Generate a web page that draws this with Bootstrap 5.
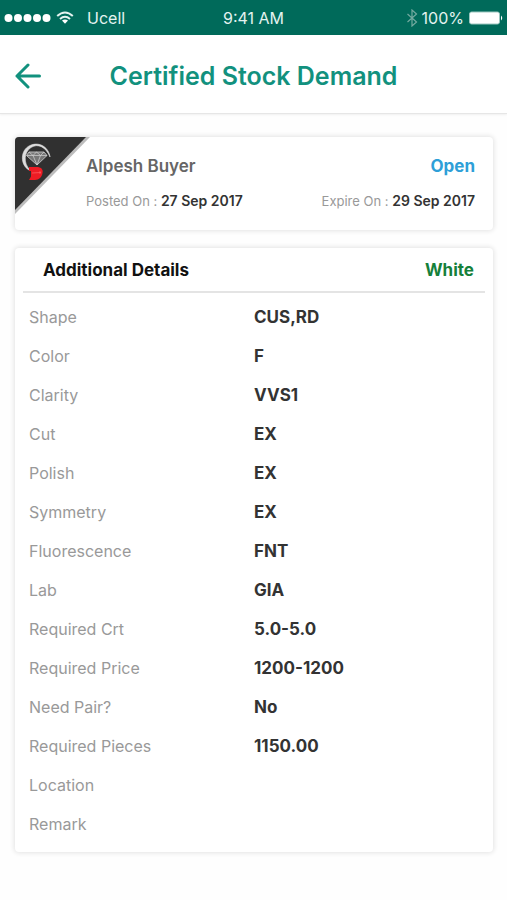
<!DOCTYPE html>
<html lang="en">
<head>
<meta charset="utf-8">
<meta name="viewport" content="width=device-width, initial-scale=1">
<title>Certified Stock Demand</title>
<link href="https://cdn.jsdelivr.net/npm/bootstrap@5.3.0/dist/css/bootstrap.min.css" rel="stylesheet">
<style>
  body { font-family: Inter, "Liberation Sans", sans-serif; font-size: 16px; line-height: 24px; background: #fefefe; color: #333; }
  .status-bar { height: 35px; background: #006a5a; color: #e4f3f0; }
  .status-bar svg, .app-header svg, .brand-corner { display: block; }
  .app-header { height: 79px; padding: 4px 15px 0; border-bottom: 1px solid #e6e6e6; box-shadow: 0 1px 2px #0000000f; background: #fff; }
  .app-header h1 { font-size: 25px; line-height: 32px; color: #12917e; }
  .side { flex: 1 1 0; }
  .page { padding: 23px 14px 22px 15px; }
  .panel { border: 0; border-radius: 4px; box-shadow: 0 0 5px 1px #0000001c; background: #fff; }
  .summary { margin-bottom: 18px; }
  .brand-corner { width: 71px; height: 77px; border-top-left-radius: 4px; overflow: visible; }
  .summary-text { padding: 17px 18px 19px 0; }
  .summary-main { margin-bottom: 13px; font-size: 17px; }
  .buyer-name { color: #666; }
  .state-open { color: #2e9fd8; }
  .dates { font-size: 13px; line-height: 20px; color: #999; }
  .dates strong { font-size: 14px; color: #333; }
  .details-head { margin: 0 8px 4px; padding: 10px 11px 9px 20px; border-bottom: 2px solid #e4e4e4; font-size: 17px; }
  .details-head h2 { font-size: 17px; line-height: 24px; color: #111; }
  .kind { color: #15803a; }
  .details { margin-bottom: 9px; }
  .details td, .details th { height: 39px; padding: 0; vertical-align: middle; text-align: left; }
  .details th { width: 50%; padding-left: 14px; font-weight: 400; color: #999; }
  .details td { font-size: 17px; font-weight: 700; }
</style>
</head>
<body>
<div class="status-bar d-flex align-items-center px-1">
  <div class="side d-flex align-items-center">
    <svg width="47" height="10" viewBox="0 0 47 10" fill="#fff" aria-hidden="true"><circle cx="4.500" cy="5" r="4"/><circle cx="14" cy="5" r="4"/><circle cx="23.500" cy="5" r="4"/><circle cx="33" cy="5" r="4"/><circle cx="42.500" cy="5" r="4"/></svg>
    <svg class="ms-1" width="20" height="14" viewBox="0 0 20 14" fill="none" stroke="#e4f3f0" stroke-width="2" aria-hidden="true"><path d="M2.200 5Q10-2 17.800 5M5 8Q10 3.600 15 8"/><path d="M7 9.500Q10 7.300 13 9.500L10 12.700Z" fill="#fff" stroke="none"/></svg>
    <span class="ms-2 ps-1">Ucell</span>
  </div>
  <span>9:41 AM</span>
  <div class="side d-flex align-items-center justify-content-end">
    <svg class="me-1" width="12" height="18" viewBox="0 0 12 18" fill="none" stroke="#73aaa0" stroke-width="1.200" aria-hidden="true"><path d="M1.500 5L10.500 13L6 17V1L10.500 5L1.500 13"/></svg>
    <span>100%</span>
    <svg class="ms-1" width="35" height="14" viewBox="0 0 35 14" aria-hidden="true"><rect x="1.500" y="1" width="30" height="12" rx="2" fill="#fff" stroke="#9dc7c0"/><path d="M33 4.500Q35.500 7 33 9.500Z" fill="#fff"/></svg>
  </div>
</div>
<header class="app-header d-flex align-items-center">
  <div class="side">
    <button type="button" class="btn border-0 p-0" aria-label="Back">
      <svg width="26" height="26" viewBox="0 0 26 26" fill="none" stroke="#12917e" stroke-width="3" stroke-linecap="round" stroke-linejoin="round"><path d="M24.500 13H2M13 2L2 13L13 24"/></svg>
    </button>
  </div>
  <h1 class="m-0 fw-semibold text-nowrap">Certified Stock Demand</h1>
  <div class="side"></div>
</header>
<main class="page">
  <section class="panel summary card flex-row">
    <svg class="brand-corner flex-shrink-0" viewBox="0 0 71 77" role="img" aria-label="Diamond logo">
      <path d="M4 0H75L0 77V4Q0 0 4 0Z" fill="#bdbdbd"/><path d="M4 0H71L0 73V4Q0 0 4 0Z" fill="#303030"/>
      <path d="M14 33C5 28 5 13 15 8.500S34 11 35 20C31 10 23 6 16 10.500S8 26 15 33Z" fill="#ddd" stroke="#ddd" stroke-width=".6"/>
      <path d="M14 15H29L32 18.500L22 28L11.500 18.500Z" fill="#777" stroke="#c4c4c4" stroke-width=".9"/>
      <path d="M12 18.500H32M14 15L18 18.500L21.500 15L25.500 18.500L29 15M18 18.500L22 28L25.500 18.500" fill="none" stroke="#d2d2d2" stroke-width=".7"/>
      <path d="M14 30H23C28 31 28 34 27.500 36C27 40 24 43 20 43H14L16 39.500V34H14Z" fill="#ed1c24"/>
      <path d="M17 36L26 35.500M25 34V37" stroke="#ff7070" stroke-width=".6"/>
    </svg>
    <div class="summary-text flex-grow-1">
      <div class="summary-main d-flex justify-content-between">
        <span class="buyer-name fw-semibold">Alpesh Buyer</span>
        <span class="state-open fw-bold">Open</span>
      </div>
      <div class="dates d-flex justify-content-between">
        <span>Posted On : <strong class="fw-semibold">27 Sep 2017</strong></span>
        <span>Expire On : <strong class="fw-semibold">29 Sep 2017</strong></span>
      </div>
    </div>
  </section>
  <section class="panel card">
    <div class="details-head d-flex justify-content-between">
      <h2 class="m-0 fw-bold">Additional Details</h2>
      <span class="kind fw-bold">White</span>
    </div>
    <table class="details">
      <tbody>
        <tr><th scope="row">Shape</th><td>CUS,RD</td></tr>
        <tr><th scope="row">Color</th><td>F</td></tr>
        <tr><th scope="row">Clarity</th><td>VVS1</td></tr>
        <tr><th scope="row">Cut</th><td>EX</td></tr>
        <tr><th scope="row">Polish</th><td>EX</td></tr>
        <tr><th scope="row">Symmetry</th><td>EX</td></tr>
        <tr><th scope="row">Fluorescence</th><td>FNT</td></tr>
        <tr><th scope="row">Lab</th><td>GIA</td></tr>
        <tr><th scope="row">Required Crt</th><td>5.0-5.0</td></tr>
        <tr><th scope="row">Required Price</th><td>1200-1200</td></tr>
        <tr><th scope="row">Need Pair?</th><td>No</td></tr>
        <tr><th scope="row">Required Pieces</th><td>1150.00</td></tr>
        <tr><th scope="row">Location</th><td></td></tr>
        <tr><th scope="row">Remark</th><td></td></tr>
      </tbody>
    </table>
  </section>
</main>
<script src="https://cdn.jsdelivr.net/npm/bootstrap@5.3.0/dist/js/bootstrap.bundle.min.js"></script>
</body>
</html>
